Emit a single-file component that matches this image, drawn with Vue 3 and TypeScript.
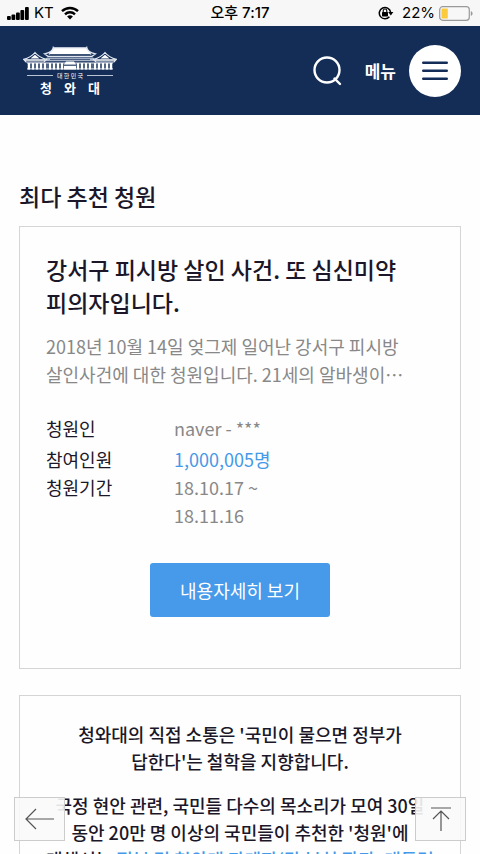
<script setup lang="ts">
interface Detail {
  label: string
  lines: string[]
  accent?: boolean
  roomy?: boolean
}

const details: Detail[] = [
  { label: '청원인', lines: ['naver - ***'], roomy: true },
  { label: '참여인원', lines: ['1,000,005명'], accent: true },
  { label: '청원기간', lines: ['18.10.17 ~', '18.11.16'] },
]

const columns = [5, 9, 13, 17, 21, 26, 30, 34, 38, 54, 58, 62, 66, 71, 75, 79, 83, 87]
</script>

<template>
  <div class="screen">
    <div class="status">
      <div class="status-side">
        <svg width="22" height="13" viewBox="0 0 22 13" aria-hidden="true">
          <rect x="0" y="9" width="3.8" height="4" rx="1" />
          <rect x="4.5" y="7.5" width="3.8" height="5.5" rx="1" />
          <rect x="9" y="5.5" width="3.8" height="7.5" rx="1" />
          <rect x="13.4" y="3" width="3.8" height="10" rx="1" />
          <rect x="18" y="0" width="3.8" height="13" rx="1" />
        </svg>
        <span class="carrier">KT</span>
        <svg width="18" height="14" viewBox="0 0 18 14" aria-hidden="true">
          <path d="M1 5.2a11.5 11.5 0 0 1 16 0M4 8.3a7.3 7.3 0 0 1 10 0" fill="none" stroke="#000" stroke-width="2.4" />
          <path d="M9 13.6 6.1 10.6a4.2 4.2 0 0 1 5.8 0z" />
        </svg>
      </div>
      <span class="clock">오후 7:17</span>
      <div class="status-side status-end">
        <svg width="16" height="14" viewBox="0 0 16 14" aria-hidden="true">
          <path d="M11.4 10.8A5.7 5.7 0 1 1 12.6 6" fill="none" stroke="#000" stroke-width="1.5" />
          <path d="M10.2 6h5.2l-2.6 3.4z" />
          <rect x="4" y="6" width="6" height="4.4" rx=".6" />
          <path d="M5.2 6.2V4.8a1.8 1.8 0 0 1 3.6 0v1.4" fill="none" stroke="#000" stroke-width="1.1" />
        </svg>
        <span class="percent">22%</span>
        <svg width="34" height="15" viewBox="0 0 34 15" aria-hidden="true">
          <rect x=".7" y=".7" width="29.6" height="13.6" rx="3" fill="none" stroke="#999" stroke-width="1.2" />
          <rect x="2.5" y="2.5" width="6.3" height="10" rx=".6" fill="#fbcb3d" />
          <path d="M31.8 5v5q1.8-.8 1.8-2.5T31.8 5z" fill="#999" />
        </svg>
      </div>
    </div>

    <header class="header">
      <a class="brand" href="#" aria-label="대한민국 청와대">
        <svg width="94" height="24" viewBox="0 0 94 24" aria-hidden="true">
          <path d="M30 1.8h34l4.5 6.7h-43z" fill="#fff" />
          <path d="M30.2.4v1.4h33.6V.4M30.5 2c-.8 3-3.5 4.8-9 5.8l3.5 2.5h44l3.5-2.5c-5.500-1-8.200-2.800-9-5.800" fill="none" stroke="#dfe5ef" stroke-width="1.200" />
          <path d="M27 8.600h40" stroke="#142d57" stroke-width=".7" />
          <path d="M24 11.500h46l4 3.800H20z" fill="#aab6ca" />
          <path d="M27 13.400h40" stroke="#142d57" stroke-width=".7" />
          <path d="M12 6.500c3 3.800 6 5.500 11.500 6.800l-2.500 2.700H3L.6 13.300C6 12 9 10.300 12 6.500z" fill="#142d57" stroke="#e5eaf2" stroke-width="1.200" />
          <path d="m12 8.800 4.500 3.700h-9zM2 13.200h20v1.600H2z" fill="#fff" />
          <path d="M82 6.500c-3 3.800-6 5.500-11.500 6.800L73 16h18l2.400-2.700C88 12 85 10.300 82 6.500z" fill="#142d57" stroke="#e5eaf2" stroke-width="1.200" />
          <path d="m82 8.800 4.500 3.700h-9zM72 13.200h20v1.600H72z" fill="#fff" />
          <rect x="4" y="16.500" width="86" height="7" fill="#506584" />
          <path d="M4 17h86M4 22.900h86" stroke="#dfe5ef" />
          <rect v-for="x in columns" :key="x" :x="x" y="17" width="2" height="6.500" fill="#fff" />
          <path d="M43 15.500h8l2 3H41zM41 20h12v3.600H41z" fill="#fff" />
        </svg>
        <span class="brand-rule">대 한 민 국</span>
        <span class="brand-name"><span>청</span><span>와</span><span>대</span></span>
      </a>
      <nav class="tools">
        <button class="icon-button" type="button" aria-label="검색">
          <svg width="30" height="32" viewBox="0 0 30 32" aria-hidden="true">
            <circle cx="14" cy="15" r="12.500" />
            <path d="m21.500 23.500 5.500 5.500" />
          </svg>
        </button>
        <button class="menu" type="button">
          <span>메뉴</span>
          <span class="menu-disc">
            <svg width="26" height="20" viewBox="0 0 26 20" aria-hidden="true">
              <path d="M1.200 1.800h23.600M1.200 9.800h23.600M1.200 17.800h23.600" />
            </svg>
          </span>
        </button>
      </nav>
    </header>

    <main class="content">
      <h1>최다 추천 청원</h1>
      <article class="card petition">
        <h2>강서구 피시방 살인 사건. 또 심신미약 피의자입니다.</h2>
        <p class="summary">2018년 10월 14일 엊그제 일어난 강서구 피시방<br>살인사건에 대한 청원입니다. 21세의 알바생이⋯</p>
        <dl>
          <div v-for="item in details" :key="item.label" class="detail" :class="{ roomy: item.roomy }">
            <dt>{{ item.label }}</dt>
            <dd :class="{ accent: item.accent }">
              <span v-for="line in item.lines" :key="line">{{ line }}</span>
            </dd>
          </div>
        </dl>
        <a class="more" href="#">내용자세히 보기</a>
      </article>

      <section class="card notice">
        <p>청와대의 직접 소통은 '국민이 물으면 정부가<br>답한다'는 철학을 지향합니다.</p>
        <p>국정 현안 관련, 국민들 다수의 목소리가 모여 30일<br>동안 20만 명 이상의 국민들이 추천한 '청원'에<br>대해서는 <em>정부 및 청와대 관계자(각 부처 장관, 대통령</em></p>
      </section>
    </main>

    <button class="float back" type="button" aria-label="뒤로">
      <svg width="30" height="22" viewBox="0 0 30 22" aria-hidden="true"><path d="M29 11H1M11 1 1 11l10 10" /></svg>
    </button>
    <button class="float top" type="button" aria-label="맨 위로">
      <svg width="22" height="24" viewBox="0 0 22 24" aria-hidden="true"><path d="M1 1h20M11 24V4M3 12l8-8 8 8" /></svg>
    </button>
  </div>
</template>

<style>
body {
  margin: 0;
  background: #fefefe;
}
</style>

<style scoped>
* {
  box-sizing: border-box;
}

.screen {
  position: relative;
  display: flex;
  flex-direction: column;
  height: 100vh;
  overflow: hidden;
  color: #1b1728;
  font-family: "Noto Sans CJK KR", sans-serif;
  font-size: 18px;
  word-break: keep-all;
}

h1, h2, p, dl, dd {
  margin: 0;
}

button {
  padding: 0;
  border: 0;
  background: none;
  color: inherit;
  font: inherit;
}

a {
  color: inherit;
  text-decoration: none;
}

.status {
  display: flex;
  flex: none;
  align-items: center;
  height: 26px;
  padding: 0 7px;
  background: #f7f7f7;
  color: #000;
  font-family: Inter, "Noto Sans CJK KR", sans-serif;
  font-size: 15px;
  line-height: 26px;
}

.status-side {
  display: flex;
  flex: 1;
  align-items: center;
}

.status-end {
  justify-content: flex-end;
}

.carrier {
  margin: 0 7px 0 5px;
}

.clock {
  font-weight: 500;
}

.percent {
  margin: 0 4px 0 8px;
}

.header {
  display: flex;
  flex: none;
  align-items: center;
  justify-content: space-between;
  height: 89px;
  padding: 0 19px 0 23px;
  background: #142d57;
  color: #fff;
}

.brand {
  display: flex;
  flex-direction: column;
  align-items: center;
  width: 94px;
}

.brand-rule {
  display: flex;
  align-items: center;
  gap: 4px;
  width: 86px;
  font-size: 6px;
  line-height: 11px;
  white-space: nowrap;
}

.brand-rule::before,
.brand-rule::after {
  flex: 1;
  height: 1px;
  background: #b9c3d3;
  content: "";
}

.brand-name {
  display: flex;
  gap: 12px;
  font-size: 13px;
  font-weight: 700;
  line-height: 14px;
}

.tools {
  display: flex;
  align-items: center;
  gap: 22px;
}

.icon-button {
  display: flex;
}

.icon-button svg {
  fill: none;
  stroke: #fff;
  stroke-width: 2.4;
  stroke-linecap: round;
}

.menu {
  display: flex;
  align-items: center;
  gap: 13px;
  font-size: 17px;
  font-weight: 700;
}

.menu-disc {
  display: grid;
  place-items: center;
  width: 52px;
  height: 52px;
  border-radius: 50%;
  background: #fff;
}

.menu-disc svg {
  fill: none;
  stroke: #142d57;
  stroke-width: 2.4;
  stroke-linecap: round;
}

.content {
  flex: 1;
  min-height: 0;
  padding: 65px 19px 0;
  overflow: hidden;
}

h1 {
  margin-bottom: 13px;
  font-size: 23px;
  font-weight: 500;
  line-height: 33px;
}

.card {
  border: 1px solid #d5d5d5;
}

.petition {
  padding: 26px 26px 51px;
}

h2 {
  font-size: 23px;
  font-weight: 500;
  line-height: 33px;
}

.summary {
  margin-top: 13px;
  color: #888;
  line-height: 28px;
}

dl {
  margin-top: 26px;
  line-height: 28px;
}

.detail {
  display: grid;
  grid-template-columns: 128px 1fr;
}

.roomy {
  margin-bottom: 3px;
}

dd {
  display: flex;
  flex-direction: column;
  color: #888;
}

.accent {
  color: #4499e8;
}

.more {
  display: block;
  width: fit-content;
  margin: 34px auto 0;
  padding: 0 30px;
  border-radius: 3px;
  background: #469ae9;
  color: #fff;
  line-height: 54px;
}

.notice {
  margin-top: 26px;
  padding: 25px 20px;
  font-weight: 500;
  line-height: 27px;
  text-align: center;
}

.notice p + p {
  margin-top: 17px;
}

.notice em {
  color: #4499e8;
  font-style: normal;
}

.float {
  position: absolute;
  bottom: 13px;
  display: grid;
  place-items: center;
  width: 51px;
  height: 44px;
  border: 1px solid #ccc;
  background: rgba(250, 250, 250, 0.9);
}

.float svg {
  fill: none;
  stroke: #555;
  stroke-width: 1.2;
}

.back {
  left: 14px;
}

.top {
  right: 14px;
}
</style>
